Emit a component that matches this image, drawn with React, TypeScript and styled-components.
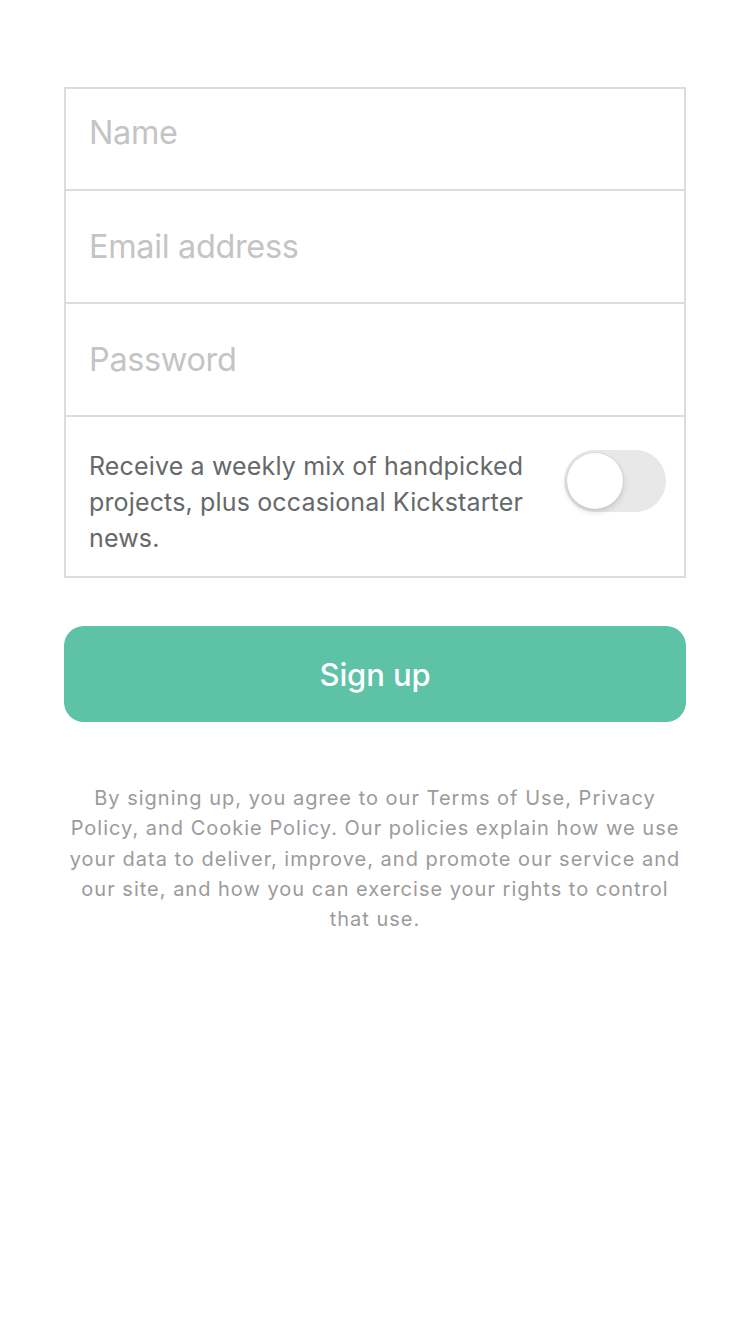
import React from "react";
import styled, { createGlobalStyle } from "styled-components";

const GlobalStyle = createGlobalStyle`
  html, body {
    margin: 0;
    padding: 0;
    background: #ffffff;
  }
  body {
    font-family: Inter, "Noto Sans", Roboto, sans-serif;
    -webkit-font-smoothing: antialiased;
  }
`;

const Page = styled.div`
  width: 750px;
  min-height: 1334px;
  box-sizing: border-box;
  padding: 87px 64px 0;
  display: flex;
  flex-direction: column;
  background: #ffffff;
`;

const Card = styled.div`
  border: 2px solid #dcdcdc;
  display: flex;
  flex-direction: column;
`;

const FieldRow = styled.label<{ $height: number; $shift?: number }>`
  display: flex;
  align-items: center;
  height: ${(p) => p.$height}px;
  padding: 0 24px ${(p) => p.$shift ?? 0}px 23px;
  border-bottom: 2px solid #dcdcdc;
  box-sizing: content-box;
`;

const Input = styled.input`
  flex: 1;
  border: none;
  outline: none;
  padding: 0;
  margin: 0;
  background: transparent;
  font-family: Inter, "Noto Sans", Roboto, sans-serif;
  font-size: 32.4px;
  letter-spacing: -0.3px;
  color: #333;
  &::placeholder {
    color: #c4c4c4;
  }
`;

const ToggleRow = styled.div`
  display: flex;
  align-items: flex-start;
  justify-content: space-between;
  padding: 31px 18px 20px 23px;
`;

const ToggleLabel = styled.p`
  margin: 0;
  font-size: 25px;
  line-height: 36px;
  color: #656969;
  letter-spacing: 0.15px;
`;

const Switch = styled.button`
  position: relative;
  flex: none;
  width: 102px;
  height: 62px;
  margin-top: 2px;
  border-radius: 31px;
  border: none;
  padding: 0;
  background: #e8e8e8;
  cursor: pointer;
`;

const Knob = styled.span`
  position: absolute;
  left: 3px;
  top: 3px;
  width: 56px;
  height: 56px;
  border-radius: 50%;
  background: #ffffff;
  box-shadow: 0 3px 6px rgba(0, 0, 0, 0.14), 0 0 0 1px rgba(0, 0, 0, 0.04);
`;

const SignUpButton = styled.button`
  margin-top: 48px;
  height: 96px;
  border: none;
  border-radius: 20px;
  background: #5dc2a6;
  color: #ffffff;
  font-family: Inter, "Noto Sans", Roboto, sans-serif;
  font-size: 31px;
  font-weight: 500;
  letter-spacing: -0.1px;
  cursor: pointer;
`;

const Legal = styled.p`
  margin: 61px 0 0;
  text-align: center;
  font-size: 20px;
  line-height: 30.3px;
  color: #9b9b9b;
  letter-spacing: 1px;
`;

export default function App() {
  return (
    <>
      <GlobalStyle />
      <Page>
        <Card>
          <FieldRow $height={86} $shift={14}>
            <Input type="text" placeholder="Name" />
          </FieldRow>
          <FieldRow $height={111}>
            <Input type="email" placeholder="Email address" />
          </FieldRow>
          <FieldRow $height={111}>
            <Input type="password" placeholder="Password" />
          </FieldRow>
          <ToggleRow>
            <ToggleLabel>
              Receive a weekly mix of handpicked
              <br />
              projects, plus occasional Kickstarter
              <br />
              news.
            </ToggleLabel>
            <Switch type="button" role="switch" aria-checked={false}>
              <Knob />
            </Switch>
          </ToggleRow>
        </Card>
        <SignUpButton type="button">Sign up</SignUpButton>
        <Legal>
          By signing up, you agree to our Terms of Use, Privacy
          <br />
          Policy, and Cookie Policy. Our policies explain how we use
          <br />
          your data to deliver, improve, and promote our service and
          <br />
          our site, and how you can exercise your rights to control
          <br />
          that use.
        </Legal>
      </Page>
    </>
  );
}
